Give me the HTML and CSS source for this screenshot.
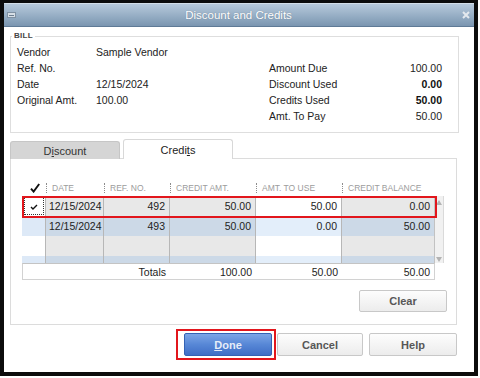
FILE: index.html
```html
<!DOCTYPE html>
<html lang="en">
<head>
  <meta charset="UTF-8">
  <meta name="viewport" content="width=device-width, initial-scale=1.0">
  <title>Discount and Credits</title>

  <link rel="stylesheet" href="styles.css">
</head>
<body>
  <div class="window">
    <div class="titlebar">
      <span class="sysIcon"><span></span></span>
      <span class="title">Discount and Credits</span>
      <span class="close">
        <svg width="8" height="8" viewBox="0 0 8 8"><path d="M1 1 L7 7 M7 1 L1 7" stroke="#e4e9ee" stroke-width="2"/></svg>
      </span>
    </div>

    <div class="content">
      <fieldset class="bill">
        <legend>BILL</legend>
        <div class="billLeft">
          <span>Vendor</span><span>Sample Vendor</span>
          <span>Ref. No.</span><span></span>
          <span>Date</span><span>12/15/2024</span>
          <span>Original Amt.</span><span>100.00</span>
        </div>
        <div class="billRight">
          <span>Amount Due</span><span class="num">100.00</span>
          <span>Discount Used</span><span class="num strong">0.00</span>
          <span>Credits Used</span><span class="num strong">50.00</span>
          <span>Amt. To Pay</span><span class="num">50.00</span>
        </div>
      </fieldset>

      <!-- Tabs -->
      <div class="tabs">
        <div class="tab">D<u>i</u>scount</div>
        <div class="tab active">Credi<u>t</u>s</div>
      </div>

      <div class="panel">
        <div class="grid">
          <div class="gridHead">
            <span class="hCheck">
              <svg width="10" height="10" viewBox="0 0 10 10"><path d="M1 5.6 L3.6 8.6 L9.2 1" fill="none" stroke="#111" stroke-width="1.9"/></svg>
            </span>
            <span class="hCell">DATE</span>
            <span class="hCell">REF. NO.</span>
            <span class="hCell">CREDIT AMT.</span>
            <span class="hCell">AMT. TO USE</span>
            <span class="hCell">CREDIT BALANCE</span>
          </div>

          <div class="gridBody">
            <div class="rows">
              <div class="row odd">
                <span class="chk"><span class="focusBox">
                  <svg width="8" height="6" viewBox="0 0 8 6"><path d="M1 3 L3 5 L7 1" fill="none" stroke="#111" stroke-width="1.4"/></svg>
                </span></span>
                <span class="left">12/15/2024</span>
                <span>492</span>
                <span>50.00</span>
                <span class="amt">50.00</span>
                <span class="bal">0.00</span>
              </div>
              <div class="row even">
                <span class="chk"></span>
                <span class="left">12/15/2024</span>
                <span>493</span>
                <span>50.00</span>
                <span class="amt">0.00</span>
                <span class="bal">50.00</span>
              </div>
              <div class="row odd">
                <span class="chk"></span><span></span><span></span><span></span><span class="amt"></span><span class="bal"></span>
              </div>
              <div class="row even">
                <span class="chk"></span><span></span><span></span><span></span><span class="amt"></span><span class="bal"></span>
              </div>
            </div>
            <div class="vScroll">
              <span class="arrowUp"></span>
              <span class="arrowDown"></span>
            </div>
            <div class="selMark"></div>
          </div>

          <div class="totals">
            <span>Totals</span>
            <span>100.00</span>
            <span>50.00</span>
            <span>50.00</span>
          </div>
        </div>

        <div class="panelActions">
          <button class="btn clearBtn">Clear</button>
        </div>
      </div>

      <div class="actions">
        <span class="doneMark"><button class="btn primary"><u>D</u>one</button></span>
        <button class="btn">Cancel</button>
        <button class="btn helpBtn">Help</button>
      </div>
    </div>
  </div>
</body>
</html>
```

FILE: styles.css
```css
body {
  margin: 0;
  background: #fff;
  font-family: "Liberation Sans", Arial, sans-serif;
  font-size: 10.5px;
  color: #222;
}
.window {
  width: 478px;
  height: 376px;
  box-sizing: border-box;
  border: 4px solid #0c0c0c;
  border-top-width: 3px;
  display: flex;
  flex-direction: column;
  background: #fff;
}

/* title bar */
.titlebar {
  height: 24px;
  box-sizing: border-box;
  display: grid;
  grid-template-columns: 1fr auto 1fr;
  align-items: center;
  padding: 0 4px 0 3px;
  background: linear-gradient(#b7c9db, #95adc4 55%, #7a95b0);
  border-top: 1px solid #d3dee8;
  border-bottom: 1px solid #5f7a96;
}
.title {
  color: #fff;
  font-size: 11.5px;
  text-shadow: 0 0 1px rgba(40, 60, 80, .45);
}
.sysIcon {
  justify-self: start;
  width: 9px;
  height: 6px;
  box-sizing: border-box;
  border: 1px solid #7f91a3;
  background: #d6dee6;
  display: flex;
  align-items: center;
  justify-content: center;
}
.sysIcon span {
  width: 5px;
  height: 1px;
  background: #6d7f91;
}
.close {
  justify-self: end;
  display: flex;
}

.content {
  flex: 1;
  padding: 0 17px 0 6px;
  display: flex;
  flex-direction: column;
}

/* bill box */
.bill {
  margin: 4px -2px 0 0;
  padding: 3px 16px 8px 6px;
  border: 1px solid #dedede;
  display: flex;
  min-width: 0;
}
.bill legend {
  font-size: 8px;
  font-weight: bold;
  color: #444;
  line-height: 10px;
  padding: 0 2px;
  margin-left: -5px;
  letter-spacing: .3px;
}
.billLeft {
  display: grid;
  grid-template-columns: 79px auto;
  grid-auto-rows: 16px;
  align-items: center;
  align-content: start;
}
.billRight {
  margin-left: auto;
  margin-top: 16px;
  width: 173px;
  display: grid;
  grid-template-columns: 1fr auto;
  grid-auto-rows: 16px;
  align-items: center;
}
.num {
  text-align: right;
}
.strong {
  font-weight: bold;
  color: #111;
}

/* tabs */
.tabs {
  display: flex;
  align-items: flex-end;
  gap: 3px;
  margin-top: 6px;
  margin-bottom: -1px;
  position: relative;
  z-index: 1;
}
.tab {
  width: 110px;
  height: 18px;
  box-sizing: border-box;
  display: flex;
  align-items: center;
  justify-content: center;
  background: #d5d5d5;
  border: 1px solid #c6c6c6;
  border-bottom: none;
  border-radius: 3px 3px 0 0;
  font-size: 11px;
  color: #333;
}
.tab.active {
  height: 20px;
  background: #fff;
  border-color: #d8d8d8;
  color: #222;
}

.panel {
  border: 1px solid #dcdcdc;
  padding: 21px 9px 12px 11px;
}

/* credits grid */
.grid {
  width: 422px;
}
.gridHead, .row {
  display: grid;
  grid-template-columns: 24px 58px 66px 86px 86px 92px;
}
.gridHead {
  height: 16px;
  align-items: center;
}
.hCheck {
  display: flex;
  justify-content: center;
  padding-left: 2px;
}
.hCell {
  position: relative;
  padding-left: 6px;
  font-size: 8.5px;
  color: #9c9c9c;
  white-space: nowrap;
}
.hCell::before {
  content: "";
  position: absolute;
  left: 0;
  top: 0;
  height: 10px;
  border-left: 1px dotted #8c8c8c;
}
.gridBody {
  display: flex;
  position: relative;
}
.rows {
  width: 412px;
  height: 67px;
  overflow: hidden;
}
.row {
  height: 20px;
}
.row > span {
  display: flex;
  align-items: center;
  justify-content: flex-end;
  padding: 0 4px 0 3px;
  border-right: 1px solid #b7b7b7;
  font-size: 10.5px;
}
.row > span.left {
  justify-content: flex-start;
}
.row > span.bal {
  border-right: none;
}
.row.odd > span {
  background: #e8e8e8;
}
.row.odd > span.chk, .row.odd > span.amt {
  background: #fff;
}
.row.even > span {
  background: #ccd9e7;
}
.row.even > span.chk {
  background: #dde9f7;
}
.row.even > span.amt {
  background: #e3eefa;
}
.row > span.chk {
  padding: 0;
  justify-content: center;
}
.focusBox {
  width: 20px;
  height: 18px;
  box-sizing: border-box;
  border: 1px dotted #333;
  display: flex;
  align-items: center;
  justify-content: center;
  padding-top: 2px;
}
.vScroll {
  width: 10px;
  height: 67px;
  box-sizing: border-box;
  background: #f1f1f1;
  border-left: 1px solid #c2c2c2;
  border-right: 1px solid #dadada;
  display: flex;
  flex-direction: column;
  justify-content: space-between;
  align-items: center;
  padding: 4px 0 1px;
}
.arrowUp, .arrowDown {
  width: 0;
  height: 0;
  border-left: 3px solid transparent;
  border-right: 3px solid transparent;
}
.arrowUp {
  border-bottom: 5px solid #b3b3b3;
}
.arrowDown {
  border-top: 5px solid #b3b3b3;
}
.selMark {
  position: absolute;
  left: 0;
  top: 0;
  width: 415px;
  height: 22px;
  box-sizing: border-box;
  border: 2px solid #e2161c;
}
.totals {
  width: 413px;
  height: 17px;
  box-sizing: border-box;
  display: grid;
  grid-template-columns: 147px 86px 86px 92px;
  align-items: center;
  border: 1px solid #d2d2d2;
  border-top-color: #c4c4c4;
}
.totals span {
  text-align: right;
  padding-right: 4px;
}

/* buttons */
.panelActions {
  display: flex;
  justify-content: flex-end;
  margin-top: 10px;
}
.btn {
  font-family: "Liberation Sans", Arial, sans-serif;
  font-size: 11px;
  font-weight: bold;
  color: #575757;
  width: 86px;
  height: 23px;
  padding: 0;
  background: linear-gradient(#fdfdfd, #ececec);
  border: 1px solid #c8c8c8;
  border-radius: 2px;
}
.clearBtn {
  width: 88px;
  height: 22px;
}
.helpBtn {
  width: 88px;
}
.btn.primary {
  width: 88px;
  color: #e6edf8;
  background: linear-gradient(#7ca6e6, #5787d6 50%, #3f6ec6);
  border-color: #3462b4;
}
.actions {
  display: flex;
  justify-content: flex-end;
  align-items: center;
  margin-top: 4px;
}
.doneMark {
  display: flex;
  padding: 2px 2px 2px 6px;
  border: 2px solid #e2161c;
  margin-right: 1px;
}
.actions > .btn + .btn {
  margin-left: 6px;
}
```
